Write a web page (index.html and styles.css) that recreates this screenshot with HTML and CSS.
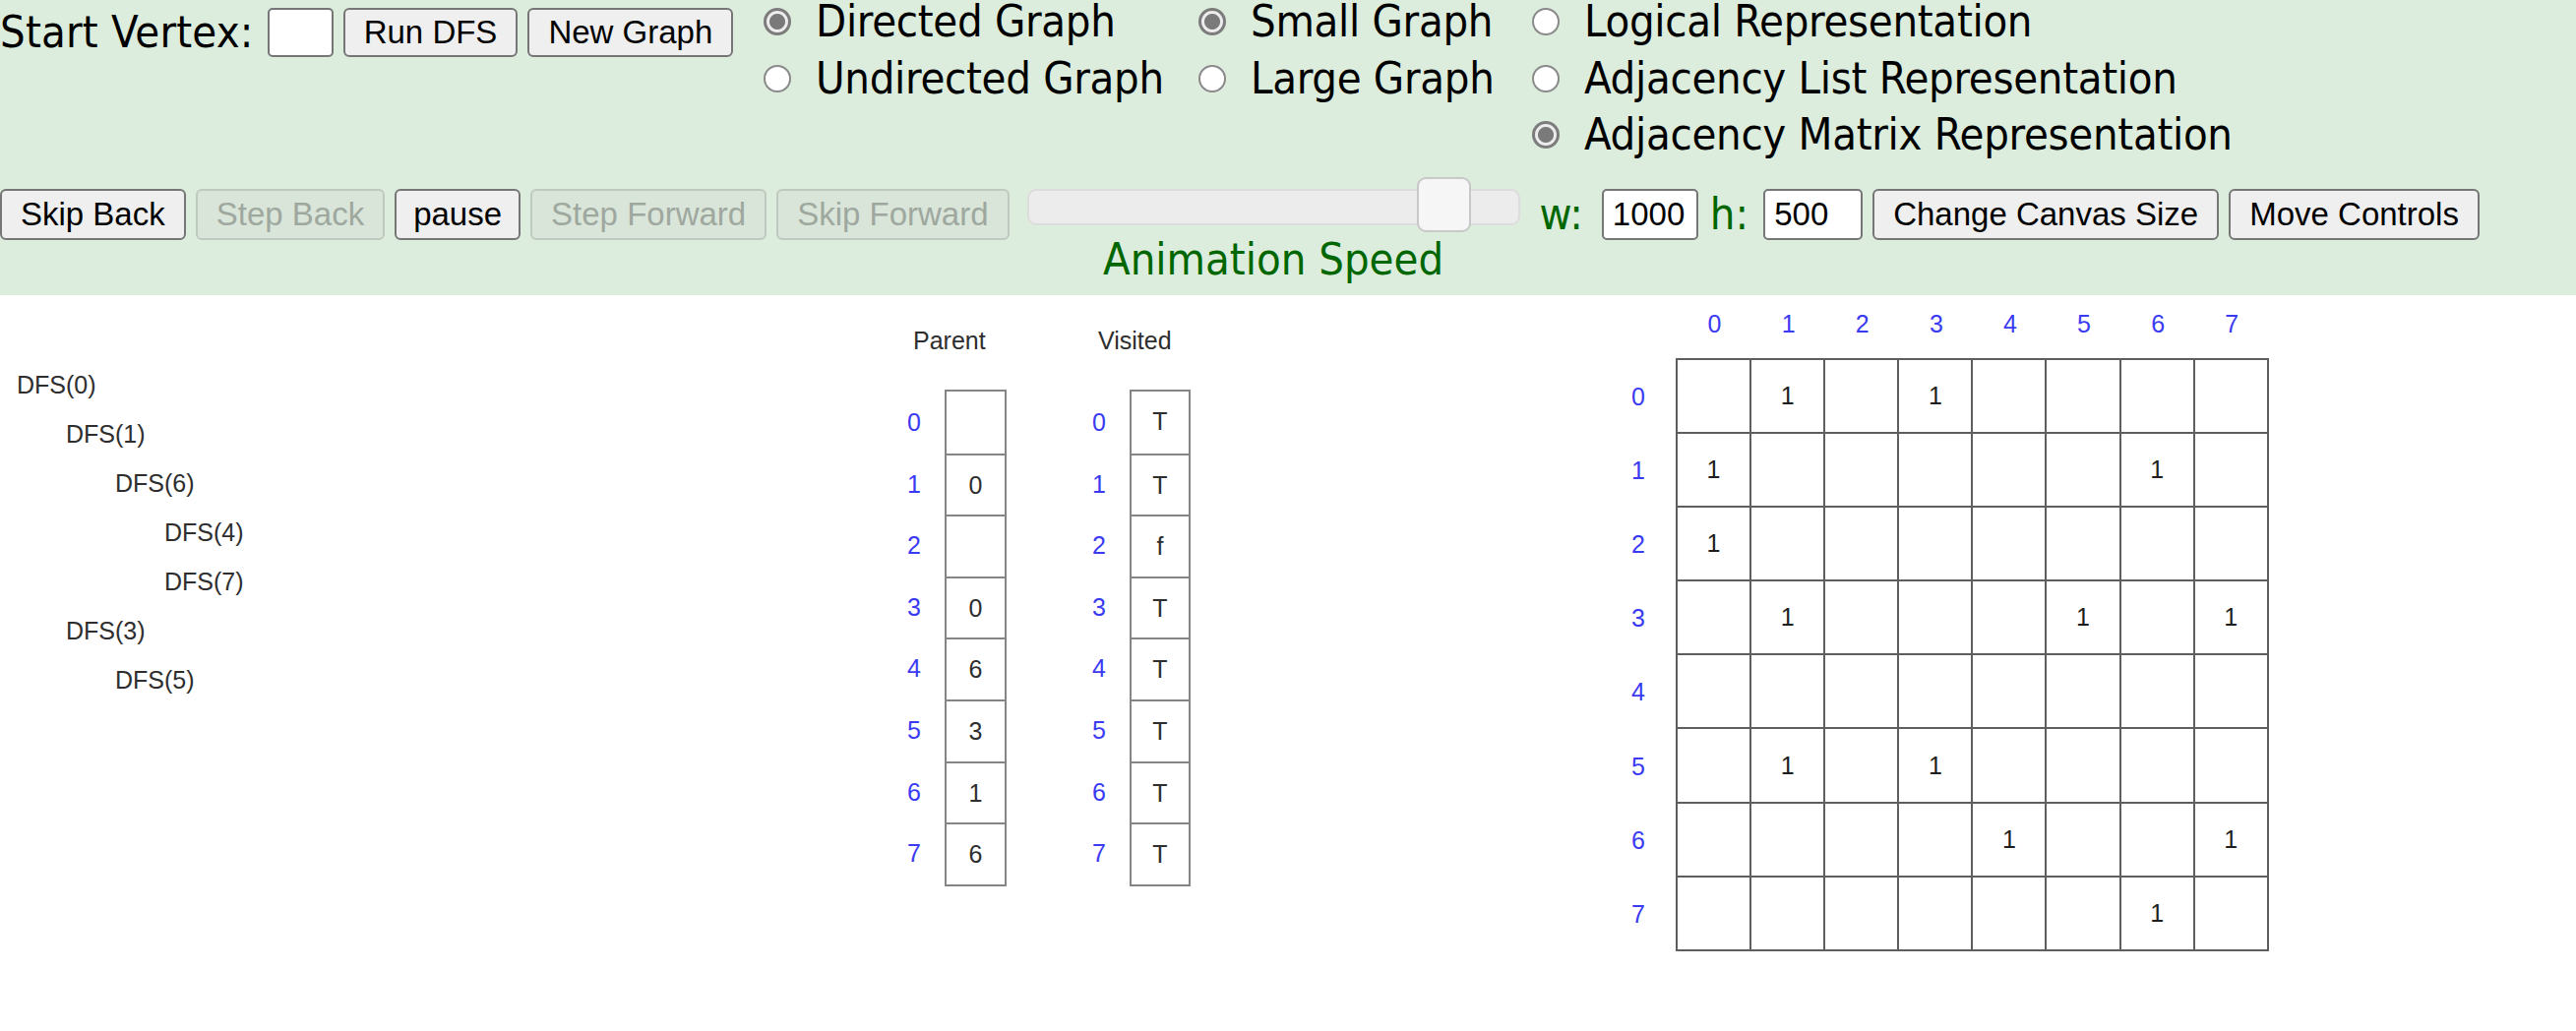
FILE: index.html
```html
<!DOCTYPE html>
<html lang="en">
<head>
<meta charset="utf-8">
<title>DFS Visualization</title>
<link rel="stylesheet" href="styles.css">
</head>
<body>
<header class="controls">
  <div class="row1">
    <div class="start">
      <span class="lbl">Start Vertex:</span>
      <input class="field vtx" type="text">
      <button class="btn">Run DFS</button>
      <button class="btn">New Graph</button>
    </div>
    <div class="rcol c1">
      <label class="opt"><input type="radio" name="dir" checked><span>Directed Graph</span></label>
      <label class="opt"><input type="radio" name="dir"><span>Undirected Graph</span></label>
    </div>
    <div class="rcol c2">
      <label class="opt"><input type="radio" name="size" checked><span>Small Graph</span></label>
      <label class="opt"><input type="radio" name="size"><span>Large Graph</span></label>
    </div>
    <div class="rcol c3">
      <label class="opt"><input type="radio" name="rep"><span>Logical Representation</span></label>
      <label class="opt"><input type="radio" name="rep"><span>Adjacency List Representation</span></label>
      <label class="opt"><input type="radio" name="rep" checked><span>Adjacency Matrix Representation</span></label>
    </div>
  </div>
  <div class="row2">
    <button class="btn">Skip Back</button>
    <button class="btn" disabled>Step Back</button>
    <button class="btn pause">pause</button>
    <button class="btn" disabled>Step Forward</button>
    <button class="btn" disabled>Skip Forward</button>
    <div class="speed">
      <div class="slider"><span class="thumb"></span></div>
      <div class="caption">Animation Speed</div>
    </div>
    <span class="glbl wl">w:</span>
    <input class="field cw" type="text" value="1000">
    <span class="glbl hl">h:</span>
    <input class="field ch" type="text" value="500">
    <button class="btn">Change Canvas Size</button>
    <button class="btn">Move Controls</button>
  </div>
</header>

<main class="canvas">
  <div class="tree">
    <div class="call l0">DFS(0)</div>
    <div class="call l1">DFS(1)</div>
    <div class="call l2">DFS(6)</div>
    <div class="call l3">DFS(4)</div>
    <div class="call l3">DFS(7)</div>
    <div class="call l1">DFS(3)</div>
    <div class="call l2">DFS(5)</div>
  </div>

  <div class="arr parent">
    <div class="alabel">Parent</div>
    <div class="abody">
      <div class="idx"><span>0</span><span>1</span><span>2</span><span>3</span><span>4</span><span>5</span><span>6</span><span>7</span></div>
      <div class="cells"><span></span><span>0</span><span></span><span>0</span><span>6</span><span>3</span><span>1</span><span>6</span></div>
    </div>
  </div>

  <div class="arr visited">
    <div class="alabel">Visited</div>
    <div class="abody">
      <div class="idx"><span>0</span><span>1</span><span>2</span><span>3</span><span>4</span><span>5</span><span>6</span><span>7</span></div>
      <div class="cells"><span>T</span><span>T</span><span>f</span><span>T</span><span>T</span><span>T</span><span>T</span><span>T</span></div>
    </div>
  </div>

  <div class="matrix">
    <div class="mhead"><span>0</span><span>1</span><span>2</span><span>3</span><span>4</span><span>5</span><span>6</span><span>7</span></div>
    <div class="mbody">
      <div class="rlab"><span>0</span><span>1</span><span>2</span><span>3</span><span>4</span><span>5</span><span>6</span><span>7</span></div>
      <div class="grid">
        <span></span><span>1</span><span></span><span>1</span><span></span><span></span><span></span><span></span>
        <span>1</span><span></span><span></span><span></span><span></span><span></span><span>1</span><span></span>
        <span>1</span><span></span><span></span><span></span><span></span><span></span><span></span><span></span>
        <span></span><span>1</span><span></span><span></span><span></span><span>1</span><span></span><span>1</span>
        <span></span><span></span><span></span><span></span><span></span><span></span><span></span><span></span>
        <span></span><span>1</span><span></span><span>1</span><span></span><span></span><span></span><span></span>
        <span></span><span></span><span></span><span></span><span>1</span><span></span><span></span><span>1</span>
        <span></span><span></span><span></span><span></span><span></span><span></span><span>1</span><span></span>
      </div>
    </div>
  </div>
</main>
</body>
</html>
```

FILE: styles.css
```css
html, body {
  margin: 0;
  padding: 0;
  background: #ffffff;
}

body {
  width: 2618px;
  height: 1048px;
  overflow: hidden;
  font-family: "Liberation Sans", Arial, sans-serif;
}

/* ---------- control panel ---------- */
.controls {
  background: #ddeddd;
  height: 300px;
  font-family: "DejaVu Sans", Verdana, sans-serif;
  font-stretch: condensed;
  font-size: 45px;
  color: #000;
}

.row1 {
  display: flex;
  height: 180px;
}

.start {
  width: 776px;
  flex: none;
  display: flex;
  align-items: center;
  height: 50px;
  margin-top: 8px;
}

.lbl {
  white-space: nowrap;
  line-height: 50px;
  letter-spacing: 0.2px;
}

.btn {
  font-family: "Liberation Sans", Arial, sans-serif;
  font-size: 33px;
  color: #000;
  background: #efefef;
  border: 2px solid #767676;
  border-radius: 6px;
  padding: 0 19px;
  height: 52px;
  margin: 0;
  white-space: nowrap;
  flex: none;
}

.btn.pause {
  padding: 0 17px;
}

.start .btn {
  height: 50px;
  margin-left: 10px;
}

.btn:disabled {
  background: #d9e5d9;
  border-color: #bfc9bf;
  color: #9fa89f;
}

.field {
  font-family: "Liberation Sans", Arial, sans-serif;
  font-size: 33px;
  color: #000;
  background: #fff;
  border: 2px solid #767676;
  border-radius: 5px;
  padding: 0 0 0 9px;
  margin: 0;
  height: 52px;
  box-sizing: border-box;
  flex: none;
}

.vtx {
  width: 67px;
  height: 50px;
  margin-left: 14px;
}

.rcol {
  display: flex;
  flex-direction: column;
  gap: 13.5px;
  flex: none;
}

.c1 { width: 442px; }
.c2 { width: 339px; }

.opt {
  display: flex;
  align-items: center;
  height: 44px;
  line-height: 44px;
  white-space: nowrap;
  letter-spacing: -0.3px;
}

.opt input {
  appearance: none;
  -webkit-appearance: none;
  width: 28px;
  height: 28px;
  margin: 0 25px 0 0;
  border-radius: 50%;
  border: 2px solid #8a8a8a;
  background: #fff;
  box-sizing: border-box;
  flex: none;
}

.opt input:checked {
  border: 3px solid #7c7c7c;
  background: radial-gradient(circle, #7a7a7a 0 7.5px, #ececec 8.5px);
}

.row2 {
  display: flex;
  align-items: flex-start;
  margin-top: 12px;
  gap: 10px;
}

.speed {
  width: 501px;
  margin-left: 8px;
  display: flex;
  flex-direction: column;
  align-items: center;
  flex: none;
}

.slider {
  position: relative;
  width: 501px;
  height: 37px;
  box-sizing: border-box;
  background: #ececec;
  border: 2px solid #dcdcdc;
  border-radius: 9px;
}

.thumb {
  position: absolute;
  left: 394px;
  top: -14px;
  width: 55px;
  height: 56px;
  box-sizing: border-box;
  background: #f6f6f6;
  border: 2px solid #c8c8c8;
  border-radius: 9px;
}

.caption {
  color: #006600;
  line-height: 44px;
  margin-top: 13px;
  white-space: nowrap;
}

.glbl {
  color: #006600;
  line-height: 52px;
  white-space: nowrap;
}

.wl { margin-left: 10px; }
.cw { width: 98px; margin-left: 9px; }
.hl { margin-left: 2px; }
.ch { width: 101px; margin-left: 5px; }

/* ---------- canvas ---------- */
.canvas {
  position: relative;
  height: 748px;
  background: #fff;
  font-family: "Liberation Sans", Arial, sans-serif;
  font-size: 25px;
  color: #2e2e2e;
}

.tree {
  position: absolute;
  left: 17px;
  top: 66px;
}

.call {
  height: 50px;
  line-height: 50px;
  white-space: nowrap;
}

.l1 { padding-left: 50px; }
.l2 { padding-left: 100px; }
.l3 { padding-left: 150px; }

.arr {
  position: absolute;
  top: 31px;
}

.parent { left: 914px; }
.visited { left: 1102px; }

.alabel {
  height: 30px;
  line-height: 30px;
  padding-left: 14px;
  white-space: nowrap;
}

.abody {
  display: flex;
  gap: 16px;
  margin-top: 35px;
}

.idx {
  width: 30px;
  display: flex;
  flex-direction: column;
  padding-top: 2px;
  color: #3a3af2;
}

.idx span {
  height: 62.6px;
  line-height: 62.6px;
  text-align: center;
}

.cells {
  width: 59px;
  display: flex;
  flex-direction: column;
  border: 2px solid #858585;
}

.visited .cells { width: 58px; }

.cells span {
  height: 60.6px;
  line-height: 60.6px;
  text-align: center;
  border-top: 2px solid #858585;
}

.cells span:first-child { border-top: 0; height: 62.6px; }

.matrix {
  position: absolute;
  left: 1635px;
  top: 14px;
}

.mhead {
  display: grid;
  grid-template-columns: repeat(8, 75.1px);
  margin-left: 70px;
  height: 30px;
  line-height: 30px;
  text-align: center;
  color: #3a3af2;
}

.mbody {
  display: flex;
  gap: 8px;
  margin-top: 20px;
}

.rlab {
  width: 60px;
  display: grid;
  grid-template-rows: repeat(8, 75.1px);
  padding-top: 2px;
  align-items: center;
  text-align: center;
  color: #3a3af2;
}

.grid {
  display: grid;
  grid-template-columns: repeat(8, 73.1px);
  grid-auto-rows: 73.1px;
  gap: 2px;
  padding: 2px;
  background: #5e5e5e;
}

.grid span {
  background: #fff;
  display: flex;
  align-items: center;
  justify-content: center;
  color: #1e1e1e;
}
```
